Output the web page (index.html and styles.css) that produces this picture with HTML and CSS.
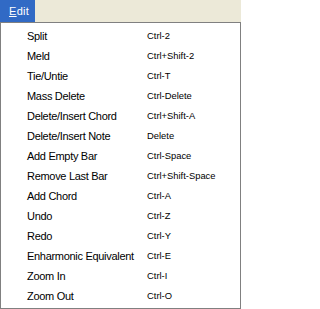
FILE: index.html
```html
<!DOCTYPE html>
<html>
<head>
<meta charset="utf-8">
<link rel="stylesheet" href="styles.css">
</head>
<body>
<div class="menubar">
  <div class="menubar-item active"><span class="acc">E</span>dit</div>
</div>
<div class="menu">
  <div class="row"><span class="label">Split</span><span class="key">Ctrl-2</span></div>
  <div class="row"><span class="label">Meld</span><span class="key">Ctrl+Shift-2</span></div>
  <div class="row"><span class="label">Tie/Untie</span><span class="key">Ctrl-T</span></div>
  <div class="row"><span class="label">Mass Delete</span><span class="key">Ctrl-Delete</span></div>
  <div class="row"><span class="label">Delete/Insert Chord</span><span class="key">Ctrl+Shift-A</span></div>
  <div class="row"><span class="label">Delete/Insert Note</span><span class="key">Delete</span></div>
  <div class="row"><span class="label">Add Empty Bar</span><span class="key">Ctrl-Space</span></div>
  <div class="row"><span class="label">Remove Last Bar</span><span class="key">Ctrl+Shift-Space</span></div>
  <div class="row"><span class="label">Add Chord</span><span class="key">Ctrl-A</span></div>
  <div class="row"><span class="label">Undo</span><span class="key">Ctrl-Z</span></div>
  <div class="row"><span class="label">Redo</span><span class="key">Ctrl-Y</span></div>
  <div class="row"><span class="label">Enharmonic Equivalent</span><span class="key">Ctrl-E</span></div>
  <div class="row"><span class="label">Zoom In</span><span class="key">Ctrl-I</span></div>
  <div class="row"><span class="label">Zoom Out</span><span class="key">Ctrl-O</span></div>
</div>
</body>
</html>
```
FILE: styles.css
```css
html, body {
  margin: 0;
  padding: 0;
  background: #ffffff;
}
body {
  font-family: "Liberation Sans", Arial, sans-serif;
  font-size: 11px;
  color: #000000;
  width: 241px;
  height: 309px;
  overflow: hidden;
}
.menubar {
  display: flex;
  height: 22px;
  background: #ece9d8;
}
.menubar-item {
  display: flex;
  align-items: center;
  width: 35px;
  padding-left: 9px;
  box-sizing: border-box;
  letter-spacing: 0.3px;
}
.menubar-item.active {
  background: #316ac5;
  color: #ffffff;
}
.acc {
  text-decoration: underline;
  text-underline-offset: 1px;
}
.menu {
  width: 241px;
  height: 287px;
  box-sizing: border-box;
  border: 1px solid #808080;
  padding: 3px 0 2px 26px;
  background: #ffffff;
}
.row {
  display: grid;
  grid-template-columns: 120px auto;
  height: 20px;
  line-height: 20px;
  align-items: center;
}
.label {
  letter-spacing: -0.3px;
  white-space: nowrap;
}
.key {
  font-size: 9.4px;
  white-space: nowrap;
}
```
